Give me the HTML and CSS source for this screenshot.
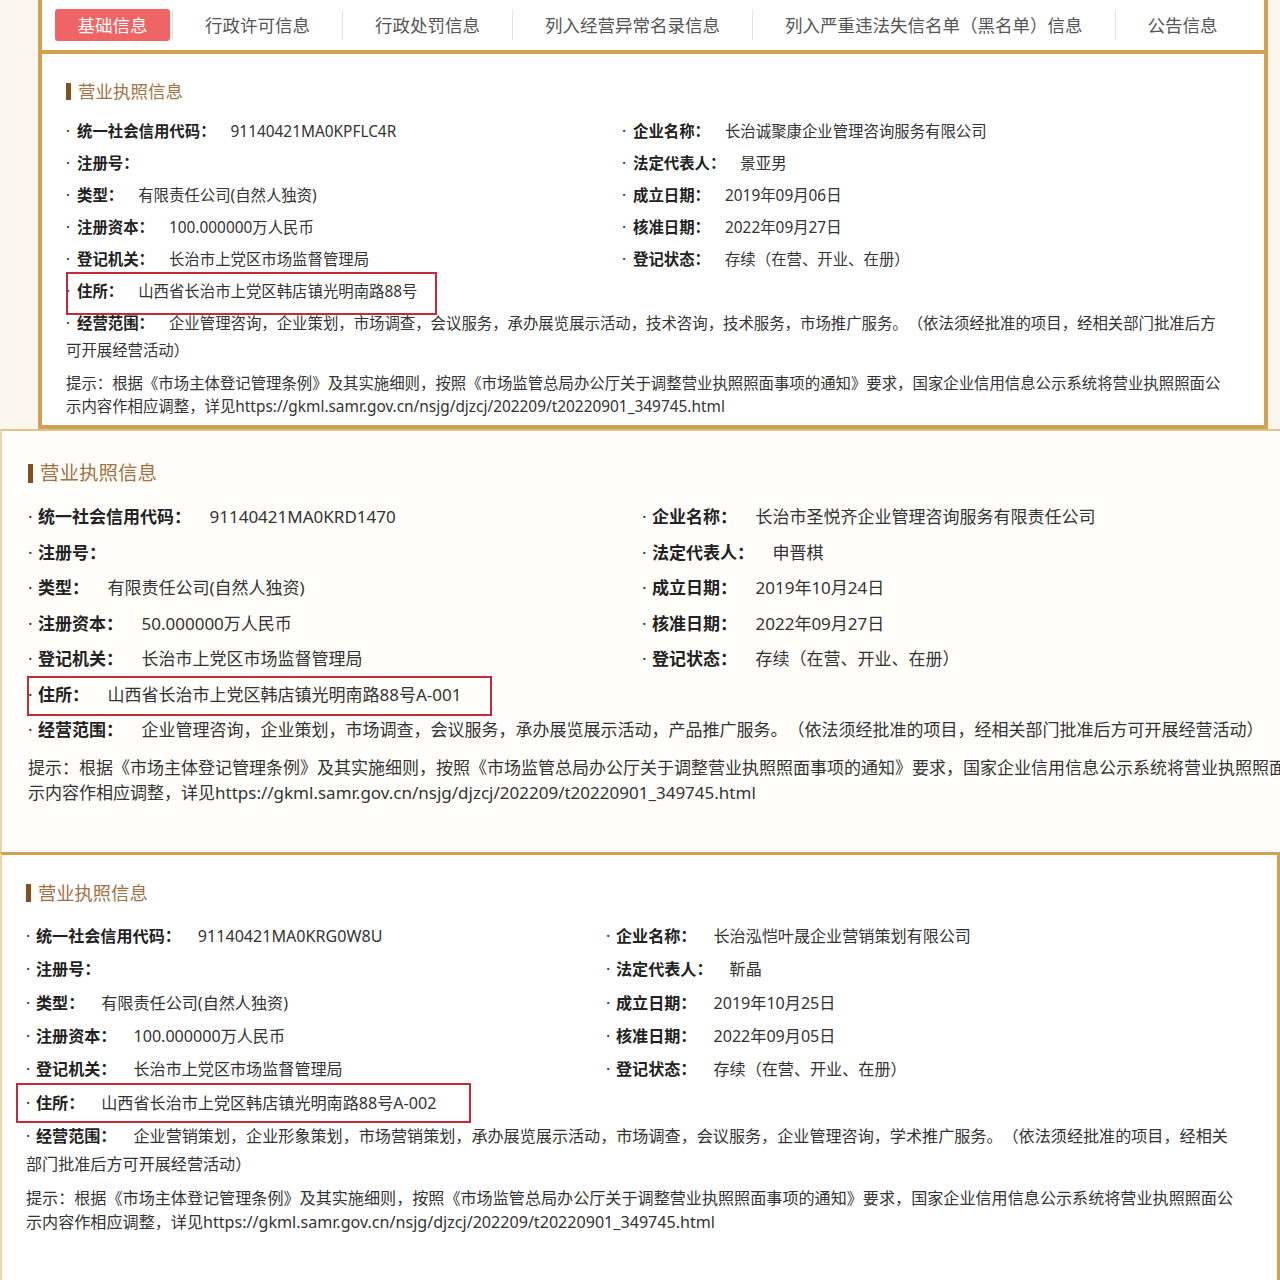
FILE: index.html
```html
<!DOCTYPE html>
<html lang="zh-CN">
<head>
<meta charset="utf-8">
<title>营业执照信息</title>
<link rel="stylesheet" href="styles.css">
</head>
<body>
<div class="shot shot-1">
  <div class="frame">
    <nav class="tabs">
      <span class="tab tab-active">基础信息</span>
      <span class="tab">行政许可信息</span>
      <span class="tab">行政处罚信息</span>
      <span class="tab">列入经营异常名录信息</span>
      <span class="tab">列入严重违法失信名单（黑名单）信息</span>
      <span class="tab">公告信息</span>
    </nav>
    <section class="info p1">
      <h2 class="title">营业执照信息</h2>
      <div class="grid">
        <div class="item"><span class="dot">·</span><b class="k">统一社会信用代码：</b><span class="v">91140421MA0KPFLC4R</span></div>
        <div class="item"><span class="dot">·</span><b class="k">企业名称：</b><span class="v">长治诚聚康企业管理咨询服务有限公司</span></div>
        <div class="item"><span class="dot">·</span><b class="k">注册号：</b></div>
        <div class="item"><span class="dot">·</span><b class="k">法定代表人：</b><span class="v">景亚男</span></div>
        <div class="item"><span class="dot">·</span><b class="k">类型：</b><span class="v">有限责任公司(自然人独资)</span></div>
        <div class="item"><span class="dot">·</span><b class="k">成立日期：</b><span class="v">2019年09月06日</span></div>
        <div class="item"><span class="dot">·</span><b class="k">注册资本：</b><span class="v">100.000000万人民币</span></div>
        <div class="item"><span class="dot">·</span><b class="k">核准日期：</b><span class="v">2022年09月27日</span></div>
        <div class="item"><span class="dot">·</span><b class="k">登记机关：</b><span class="v">长治市上党区市场监督管理局</span></div>
        <div class="item"><span class="dot">·</span><b class="k">登记状态：</b><span class="v">存续（在营、开业、在册）</span></div>
        <div class="item addr"><span class="dot">·</span><b class="k">住所：</b><span class="v">山西省长治市上党区韩店镇光明南路88号</span></div>
        <div class="item scope"><span class="dot">·</span><b class="k">经营范围：</b><span class="v">企业管理咨询，企业策划，市场调查，会议服务，承办展览展示活动，技术咨询，技术服务，市场推广服务。（依法须经批准的项目，经相关部门批准后方可开展经营活动）</span></div>
      </div>
      <p class="tip">提示：根据《市场主体登记管理条例》及其实施细则，按照《市场监管总局办公厅关于调整营业执照照面事项的通知》要求，国家企业信用信息公示系统将营业执照照面公示内容作相应调整，详见https://gkml.samr.gov.cn/nsjg/djzcj/202209/t20220901_349745.html</p>
    </section>
  </div>
</div>

<div class="shot shot-2">
  <section class="info p2">
    <h2 class="title">营业执照信息</h2>
    <div class="grid">
      <div class="item"><span class="dot">·</span><b class="k">统一社会信用代码：</b><span class="v">91140421MA0KRD1470</span></div>
      <div class="item"><span class="dot">·</span><b class="k">企业名称：</b><span class="v">长治市圣悦齐企业管理咨询服务有限责任公司</span></div>
      <div class="item"><span class="dot">·</span><b class="k">注册号：</b></div>
      <div class="item"><span class="dot">·</span><b class="k">法定代表人：</b><span class="v">申晋棋</span></div>
      <div class="item"><span class="dot">·</span><b class="k">类型：</b><span class="v">有限责任公司(自然人独资)</span></div>
      <div class="item"><span class="dot">·</span><b class="k">成立日期：</b><span class="v">2019年10月24日</span></div>
      <div class="item"><span class="dot">·</span><b class="k">注册资本：</b><span class="v">50.000000万人民币</span></div>
      <div class="item"><span class="dot">·</span><b class="k">核准日期：</b><span class="v">2022年09月27日</span></div>
      <div class="item"><span class="dot">·</span><b class="k">登记机关：</b><span class="v">长治市上党区市场监督管理局</span></div>
      <div class="item"><span class="dot">·</span><b class="k">登记状态：</b><span class="v">存续（在营、开业、在册）</span></div>
      <div class="item addr"><span class="dot">·</span><b class="k">住所：</b><span class="v">山西省长治市上党区韩店镇光明南路88号A-001</span></div>
      <div class="item scope"><span class="dot">·</span><b class="k">经营范围：</b><span class="v">企业管理咨询，企业策划，市场调查，会议服务，承办展览展示活动，产品推广服务。（依法须经批准的项目，经相关部门批准后方可开展经营活动）</span></div>
    </div>
    <p class="tip">提示：根据《市场主体登记管理条例》及其实施细则，按照《市场监管总局办公厅关于调整营业执照照面事项的通知》要求，国家企业信用信息公示系统将营业执照照面公示内容作相应调整，详见https://gkml.samr.gov.cn/nsjg/djzcj/202209/t20220901_349745.html</p>
  </section>
</div>

<div class="shot shot-3">
  <section class="info p3">
    <h2 class="title">营业执照信息</h2>
    <div class="grid">
      <div class="item"><span class="dot">·</span><b class="k">统一社会信用代码：</b><span class="v">91140421MA0KRG0W8U</span></div>
      <div class="item"><span class="dot">·</span><b class="k">企业名称：</b><span class="v">长治泓恺叶晟企业营销策划有限公司</span></div>
      <div class="item"><span class="dot">·</span><b class="k">注册号：</b></div>
      <div class="item"><span class="dot">·</span><b class="k">法定代表人：</b><span class="v">靳晶</span></div>
      <div class="item"><span class="dot">·</span><b class="k">类型：</b><span class="v">有限责任公司(自然人独资)</span></div>
      <div class="item"><span class="dot">·</span><b class="k">成立日期：</b><span class="v">2019年10月25日</span></div>
      <div class="item"><span class="dot">·</span><b class="k">注册资本：</b><span class="v">100.000000万人民币</span></div>
      <div class="item"><span class="dot">·</span><b class="k">核准日期：</b><span class="v">2022年09月05日</span></div>
      <div class="item"><span class="dot">·</span><b class="k">登记机关：</b><span class="v">长治市上党区市场监督管理局</span></div>
      <div class="item"><span class="dot">·</span><b class="k">登记状态：</b><span class="v">存续（在营、开业、在册）</span></div>
      <div class="item addr"><span class="dot">·</span><b class="k">住所：</b><span class="v">山西省长治市上党区韩店镇光明南路88号A-002</span></div>
      <div class="item scope"><span class="dot">·</span><b class="k">经营范围：</b><span class="v">企业营销策划，企业形象策划，市场营销策划，承办展览展示活动，市场调查，会议服务，企业管理咨询，学术推广服务。（依法须经批准的项目，经相关部门批准后方可开展经营活动）</span></div>
    </div>
    <p class="tip">提示：根据《市场主体登记管理条例》及其实施细则，按照《市场监管总局办公厅关于调整营业执照照面事项的通知》要求，国家企业信用信息公示系统将营业执照照面公示内容作相应调整，详见https://gkml.samr.gov.cn/nsjg/djzcj/202209/t20220901_349745.html</p>
  </section>
</div>
</body>
</html>
```

FILE: styles.css
```css
* { box-sizing: border-box; }

html, body {
  margin: 0;
  padding: 0;
  background: #ffffff;
  font-family: "Noto Sans", "Noto Sans CJK SC", sans-serif;
  color: #333333;
  text-spacing-trim: space-all;
}

.shot {
  width: 1280px;
  overflow: hidden;
}

/* ---------- screenshot 1 ---------- */
.shot-1 {
  background: #fbf7ef;
  padding-left: 38px;
  padding-right: 12px;
}

.frame {
  background: #ffffff;
  border-left: 4px solid #d3a24f;
  border-right: 4px solid #d3a24f;
  border-bottom: 4px solid #d3a24f;
}

.tabs {
  display: flex;
  align-items: center;
  height: 54px;
  padding-left: 13px;
  border-bottom: 4px solid #d3a24f;
  font-size: 17.5px;
  color: #555555;
  white-space: nowrap;
}

.tab {
  line-height: 30px;
  padding: 0 32px;
  border-left: 1px solid #e4e4e4;
}

.tab-active {
  background: #ef6565;
  color: #ffffff;
  border-left: none;
  border-radius: 3px;
  line-height: 32px;
  padding: 0 22.5px;
  margin-right: 2px;
}

/* ---------- common info block ---------- */
.info { margin: 0; }

.title {
  margin: 0;
  font-weight: normal;
  color: #a27244;
  display: flex;
  align-items: center;
}

.title::before {
  content: "";
  display: block;
  background: #85501f;
  flex: none;
}

.grid {
  display: grid;
}

.item {
  white-space: nowrap;
}

.item .k {
  font-weight: bold;
  color: #222222;
}

.item .dot {
  display: inline-block;
  color: #333333;
}

.scope {
  grid-column: 1 / -1;
  white-space: normal;
}

.addr {
  grid-column: 1;
  position: relative;
}

.addr::after {
  content: "";
  position: absolute;
  border: 2px solid #c52a3b;
  pointer-events: none;
}

.tip {
  margin: 0;
  color: #333333;
  word-break: break-all;
}

/* panel 1 metrics */
.p1 {
  padding: 24px 38px 7.5px 24px;
  font-size: 15.4px;
}
.p1 .title { font-size: 17.5px; line-height: 26px; }
.p1 .title::before { width: 5px; height: 17px; margin-right: 7px; }
.p1 .grid {
  margin-top: 13.5px;
  grid-template-columns: 556px 1fr;
  row-gap: 5px;
  line-height: 27px;
}
.p1 .dot { width: 11px; }
.p1 .v { margin-left: 15px; }
.p1 .tip { margin-top: 8px; line-height: 23px; }
.p1 .addr::after { left: 0; top: -5.5px; width: 367px; height: 39px; }

/* ---------- screenshot 2 ---------- */
.shot-2 {
  background: #fffefb;
  border-top: 2px solid #e0c28c;
  border-left: 2px solid #ead6ad;
}

.p2 {
  width: 1308px;
  padding: 28px 0 47.5px 26px;
  font-size: 17px;
}
.p2 .title { font-size: 19.5px; line-height: 28px; }
.p2 .title::before { width: 5px; height: 19px; margin-right: 7px; }
.p2 .grid {
  margin-top: 15px;
  grid-template-columns: 614px 1fr;
  row-gap: 5.5px;
  line-height: 30px;
}
.p2 .dot { width: 10px; }
.p2 .v { margin-left: 18.5px; }
.p2 .tip { margin-top: 9.5px; line-height: 25px; }
.p2 .addr::after { left: -1px; top: -3.5px; width: 461px; height: 36px; }

/* ---------- screenshot 3 ---------- */
.shot-3 {
  background: #ffffff;
  border-top: 3px solid #d3a24f;
  border-left: 2px solid #ead6ad;
  border-right: 3px solid #d3a24f;
}

.p3 {
  padding: 25px 36px 46px 24px;
  font-size: 16.1px;
}
.p3 .title { font-size: 18.3px; line-height: 26px; }
.p3 .title::before { width: 5px; height: 18px; margin-right: 7px; }
.p3 .grid {
  margin-top: 16px;
  grid-template-columns: 580px 1fr;
  row-gap: 5.33px;
  line-height: 28px;
}
.p3 .dot { width: 10px; }
.p3 .v { margin-left: 17px; }
.p3 .tip { margin-top: 8px; line-height: 24px; }
.p3 .addr::after { left: -10px; top: -5.5px; width: 451px; height: 36px; }
```
